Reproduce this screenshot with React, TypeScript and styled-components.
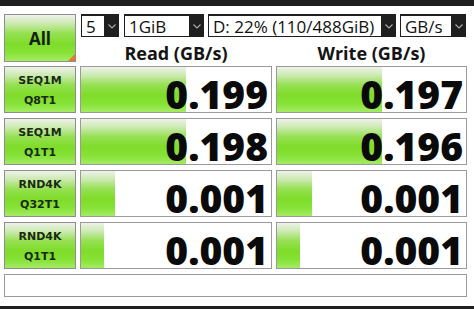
import * as React from 'react';
import styled, { createGlobalStyle } from 'styled-components';

type Result = { name: string; sub: string; read: string; write: string; readPct: number; writePct: number };

const results: Result[] = [
  { name: 'SEQ1M', sub: 'Q8T1', read: '0.199', write: '0.197', readPct: 55.3, writePct: 55.6 },
  { name: 'SEQ1M', sub: 'Q1T1', read: '0.198', write: '0.196', readPct: 55.3, writePct: 55.6 },
  { name: 'RND4K', sub: 'Q32T1', read: '0.001', write: '0.001', readPct: 17.9, writePct: 18.5 },
  { name: 'RND4K', sub: 'Q1T1', read: '0.001', write: '0.001', readPct: 12.1, writePct: 12.2 },
];

const GlobalStyle = createGlobalStyle`
  html, body { margin: 0; padding: 0; background: #ffffff; }
  body { font-family: "Open Sans", "Noto Sans", sans-serif; }
`;

const greenGradient = `linear-gradient(to bottom, #eef2ea 0%, #cdeab2 18%, #95e052 40%, #7fdc2a 62%, #86e236 82%, #a4ec64 100%)`;

const Window = styled.div`
  display: flex;
  flex-direction: column;
  width: 474px;
  height: 309px;
  overflow: hidden;
`;

const TitleStrip = styled.div`
  height: 6px;
  background: #1f1f1f;
`;

const BottomStrip = styled.div`
  height: 3px;
  margin-top: auto;
  background: #1f1f1f;
`;

const Body = styled.div`
  padding: 8px 0 0 4px;
`;

const Columns = styled.div`
  display: grid;
  grid-template-columns: 72px 192px 191px;
  column-gap: 4px;
`;

const Top = styled(Columns)`
  grid-template-rows: 23px 25px;
  margin-bottom: 4px;
`;

const Rows = styled(Columns)`
  grid-auto-rows: 47px;
  row-gap: 5px;
`;

const AllButton = styled.button`
  grid-row: 1 / span 2;
  position: relative;
  margin: 0;
  padding: 0;
  border: 1px solid #8f8f8f;
  background: ${greenGradient};
  font-family: "Open Sans", sans-serif;
  font-weight: 700;
  font-size: 17px;
  color: #142010;
  cursor: pointer;

  &::after {
    content: '';
    position: absolute;
    right: 0;
    bottom: 0;
    border-style: solid;
    border-width: 0 0 7px 7px;
    border-color: transparent transparent #e8782a transparent;
  }
`;

const ComboRow = styled.div`
  grid-column: 2 / span 2;
  display: flex;
  margin-left: 1px;
`;

const Combo = styled.div<{ $w: number; $gap: number }>`
  display: flex;
  width: ${({ $w }) => $w}px;
  margin-right: ${({ $gap }) => $gap}px;
  box-sizing: border-box;
  padding: 2px 0 1px 1px;
  background: #1f1f1f;
`;

const ComboValue = styled.div`
  flex: 1;
  display: flex;
  align-items: center;
  background: #ffffff;
  padding-left: 4px;
  font-size: 17px;
  line-height: 1;
  color: #111111;
  white-space: nowrap;
`;

const ComboArrow = styled.div`
  width: 15px;
  display: flex;
  align-items: center;
  justify-content: center;
`;

const Header = styled.div`
  display: flex;
  align-items: flex-end;
  justify-content: center;
  font-weight: 700;
  font-size: 18px;
  line-height: 1;
  color: #141414;
`;

const Label = styled.div`
  display: flex;
  flex-direction: column;
  align-items: center;
  justify-content: center;
  box-sizing: border-box;
  padding-top: 3px;
  border: 1px solid #8f8f8f;
  background: ${greenGradient};
  font-family: "DejaVu Sans", sans-serif;
  font-weight: 700;
  font-size: 11px;
  line-height: 20px;
  color: #1a2a12;
`;

const Cell = styled.div`
  position: relative;
  box-sizing: border-box;
  border: 1px solid #9a9a9a;
  background: #ffffff;
`;

const Bar = styled.div`
  position: absolute;
  left: 0;
  top: 0;
  bottom: 0;
  background: ${greenGradient};
`;

const Value = styled.div`
  position: relative;
  padding: 10px 3px 0 0;
  text-align: right;
  font-weight: 800;
  font-size: 39px;
  line-height: 34px;
  color: #0a0a0a;
`;

const Status = styled.div`
  width: 463px;
  height: 23px;
  margin-top: 5px;
  box-sizing: border-box;
  border: 1px solid #9a9a9a;
  background: #ffffff;
`;

const Chevron = () => (
  <svg width="8" height="5" viewBox="0 0 8 5">
    <polyline points="0.5,0.5 4,4 7.5,0.5" fill="none" stroke="#a8a8a8" strokeWidth="1.2" />
  </svg>
);

const combos = [
  { text: '5', w: 38, gap: 5 },
  { text: '1GiB', w: 80, gap: 4 },
  { text: 'D: 22% (110/488GiB)', w: 188, gap: 4 },
  { text: 'GB/s', w: 66, gap: 0 },
];

const ResultCell = ({ value, pct }: { value: string; pct: number }) => (
  <Cell>
    <Bar style={{ width: `${pct}%` }} />
    <Value>{value}</Value>
  </Cell>
);

const App = () => (
  <Window>
    <GlobalStyle />
    <TitleStrip />
    <Body>
      <Top>
        <AllButton>All</AllButton>
        <ComboRow>
          {combos.map((c) => (
            <Combo key={c.text} $w={c.w} $gap={c.gap}>
              <ComboValue>{c.text}</ComboValue>
              <ComboArrow>
                <Chevron />
              </ComboArrow>
            </Combo>
          ))}
        </ComboRow>
        <Header>Read (GB/s)</Header>
        <Header>Write (GB/s)</Header>
      </Top>
      <Rows>
        {results.map((r) => (
          <React.Fragment key={r.name + r.sub}>
            <Label>
              <span>{r.name}</span>
              <span>{r.sub}</span>
            </Label>
            <ResultCell value={r.read} pct={r.readPct} />
            <ResultCell value={r.write} pct={r.writePct} />
          </React.Fragment>
        ))}
      </Rows>
      <Status />
    </Body>
    <BottomStrip />
  </Window>
);

export default App;
